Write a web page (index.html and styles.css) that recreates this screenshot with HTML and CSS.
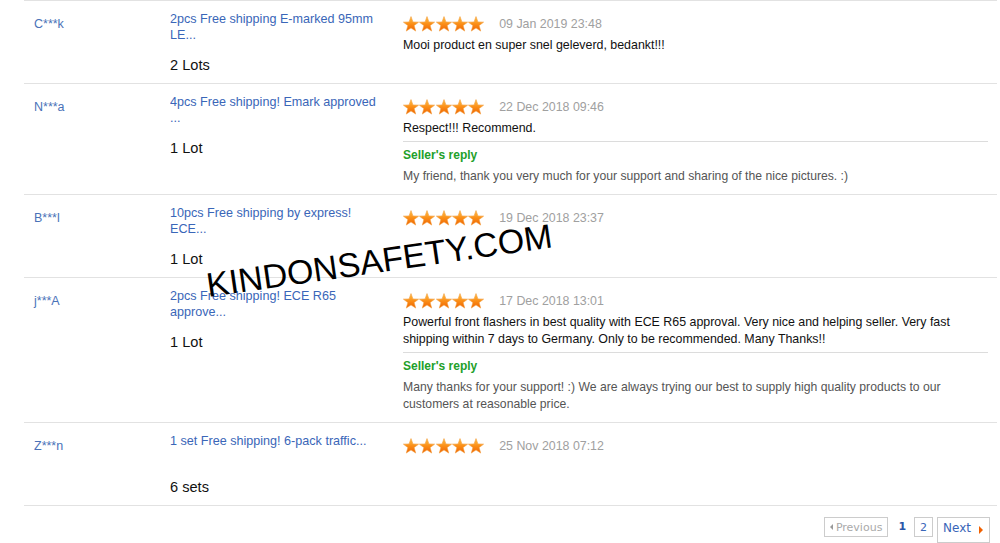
FILE: index.html
```html
<!doctype html>
<html lang="en">
  <head>
    <meta charset="UTF-8" />
    <meta name="viewport" content="width=device-width, initial-scale=1.0" />
    <link rel="stylesheet" href="styles.css">
    <title>Feedback</title>
  </head>
  <body>
    <svg class="defs" width="0" height="0">
      <defs>
        <linearGradient id="star-fill" x1="0" y1="0" x2="0" y2="1">
          <stop offset="0" stop-color="#ffc24a" />
          <stop offset="0.5" stop-color="#fb8f18" />
          <stop offset="1" stop-color="#ee6200" />
        </linearGradient>
        <symbol id="star" viewBox="0 0 16 16">
          <polygon points="8,0.6 9.94,5.93 15.61,6.13 11.14,9.62 12.7,15.07 8,11.9 3.3,15.07 4.86,9.62 0.39,6.13 6.06,5.93" fill="url(#star-fill)" stroke="#f3a040" stroke-width="0.6" stroke-linejoin="round" />
        </symbol>
      </defs>
    </svg>

    <div class="feedback">
      <div class="row">
        <div class="buyer">C***k</div>
        <div class="product">
          <a class="title" href="#">2pcs Free shipping E-marked 95mm LE...</a>
          <div class="qty">2 Lots</div>
        </div>
        <div class="review">
          <div class="meta">
            <span class="stars"><svg><use href="#star" /></svg><svg><use href="#star" /></svg><svg><use href="#star" /></svg><svg><use href="#star" /></svg><svg><use href="#star" /></svg></span>
            <span class="date">09 Jan 2019 23:48</span>
          </div>
          <p class="text">Mooi product en super snel geleverd, bedankt!!!</p>
        </div>
      </div>

      <div class="row">
        <div class="buyer">N***a</div>
        <div class="product">
          <a class="title" href="#">4pcs Free shipping! Emark approved ...</a>
          <div class="qty">1 Lot</div>
        </div>
        <div class="review">
          <div class="meta">
            <span class="stars"><svg><use href="#star" /></svg><svg><use href="#star" /></svg><svg><use href="#star" /></svg><svg><use href="#star" /></svg><svg><use href="#star" /></svg></span>
            <span class="date">22 Dec 2018 09:46</span>
          </div>
          <p class="text">Respect!!! Recommend.</p>
          <div class="reply">
            <div class="reply-title">Seller's reply</div>
            <p class="reply-text">My friend, thank you very much for your support and sharing of the nice pictures. :)</p>
          </div>
        </div>
      </div>

      <div class="row">
        <div class="buyer">B***l</div>
        <div class="product">
          <a class="title" href="#">10pcs Free shipping by express! ECE...</a>
          <div class="qty">1 Lot</div>
        </div>
        <div class="review">
          <div class="meta">
            <span class="stars"><svg><use href="#star" /></svg><svg><use href="#star" /></svg><svg><use href="#star" /></svg><svg><use href="#star" /></svg><svg><use href="#star" /></svg></span>
            <span class="date">19 Dec 2018 23:37</span>
          </div>
        </div>
      </div>

      <div class="row">
        <div class="buyer">j***A</div>
        <div class="product">
          <a class="title" href="#">2pcs Free shipping! ECE R65 approve...</a>
          <div class="qty">1 Lot</div>
        </div>
        <div class="review">
          <div class="meta">
            <span class="stars"><svg><use href="#star" /></svg><svg><use href="#star" /></svg><svg><use href="#star" /></svg><svg><use href="#star" /></svg><svg><use href="#star" /></svg></span>
            <span class="date">17 Dec 2018 13:01</span>
          </div>
          <p class="text">Powerful front flashers in best quality with ECE R65 approval. Very nice and helping seller. Very fast shipping within 7 days to Germany. Only to be recommended. Many Thanks!!</p>
          <div class="reply">
            <div class="reply-title">Seller's reply</div>
            <p class="reply-text">Many thanks for your support! :) We are always trying our best to supply high quality products to our customers at reasonable price.</p>
          </div>
        </div>
      </div>

      <div class="row">
        <div class="buyer">Z***n</div>
        <div class="product">
          <a class="title" href="#">1 set Free shipping! 6-pack traffic...</a>
          <div class="qty">6 sets</div>
        </div>
        <div class="review">
          <div class="meta">
            <span class="stars"><svg><use href="#star" /></svg><svg><use href="#star" /></svg><svg><use href="#star" /></svg><svg><use href="#star" /></svg><svg><use href="#star" /></svg></span>
            <span class="date">25 Nov 2018 07:12</span>
          </div>
        </div>
      </div>

      <div class="pager">
        <span class="page-btn disabled"><span class="arrow-left"></span>Previous</span>
        <span class="page-current">1</span>
        <a class="page-btn" href="#">2</a>
        <a class="page-btn next" href="#">Next<span class="arrow-right"></span></a>
      </div>

      <div class="watermark">KINDONSAFETY.COM</div>
    </div>
  </body>
</html>
```

FILE: styles.css
```css
body {
  margin: 0;
  background: #fff;
  font-family: "Liberation Sans", Arial, sans-serif;
  color: #222;
}

.defs {
  position: absolute;
}

.feedback {
  position: relative;
  width: 973px;
  margin-left: 24px;
  border-top: 1px solid #e2e2e2;
}

/* one feedback entry */
.row {
  display: grid;
  grid-template-columns: 136px 233px 585px;
  padding: 10px 9px 9px 10px;
  border-bottom: 1px solid #e2e2e2;
}

.buyer {
  margin-top: 5px;
  font-size: 12.5px;
  line-height: 16px;
  color: #4a72b8;
}

.title {
  display: block;
  width: 215px;
  height: 32px;
  overflow: hidden;
  font-size: 12.6px;
  line-height: 16px;
  color: #3a66b8;
  text-decoration: none;
}

.qty {
  margin-top: 13px;
  font-size: 14.6px;
  line-height: 18px;
  color: #111;
}

.meta {
  display: flex;
  align-items: center;
  height: 16px;
  margin-top: 5px;
}

.stars {
  display: flex;
  gap: 0.3px;
}

.stars svg {
  width: 16px;
  height: 16px;
}

.date {
  margin-left: 15px;
  font-size: 12.4px;
  color: #a0a0a0;
}

.text {
  margin: 5px 0 0;
  font-size: 12.4px;
  line-height: 17px;
  color: #111;
}

.reply {
  margin-top: 4px;
  padding-top: 5px;
  border-top: 1px solid #dcdcdc;
}

.reply-title {
  font-size: 12px;
  line-height: 17px;
  font-weight: bold;
  color: #22a02a;
}

.reply-text {
  margin: 4px 0 0;
  font-size: 12.2px;
  line-height: 17px;
  color: #555;
}

/* pagination */
.pager {
  display: flex;
  justify-content: flex-end;
  align-items: flex-start;
  gap: 4px;
  padding: 11px 7px 0 0;
  font-family: "DejaVu Sans", Tahoma, sans-serif;
  font-size: 11px;
}

.page-btn {
  display: flex;
  align-items: center;
  height: 18px;
  padding: 0 5px;
  border: 1px solid #ccc;
  color: #3a66b8;
  text-decoration: none;
}

.page-btn.disabled {
  color: #aaa;
  margin-right: 6px;
}

.page-current {
  height: 20px;
  line-height: 20px;
  margin-right: 4px;
  font-weight: bold;
  color: #2a56a8;
}

.page-btn.next {
  align-items: flex-start;
  height: 21px;
  padding: 3px 6px 0 5px;
  font-size: 12px;
}

.arrow-left {
  width: 0;
  height: 0;
  margin-right: 3px;
  border-top: 3px solid transparent;
  border-bottom: 3px solid transparent;
  border-right: 3px solid #999;
}

.arrow-right {
  width: 0;
  height: 0;
  margin: 5px 0 0 8px;
  border-top: 4px solid transparent;
  border-bottom: 4px solid transparent;
  border-left: 4px solid #f06000;
}

/* site watermark across the list */
.watermark {
  position: absolute;
  left: 185px;
  top: 267px;
  font-family: "Liberation Sans", Arial, sans-serif;
  font-size: 34px;
  line-height: 34px;
  color: #000;
  white-space: nowrap;
  transform: rotate(-8.2deg);
  transform-origin: 0 100%;
}
```
